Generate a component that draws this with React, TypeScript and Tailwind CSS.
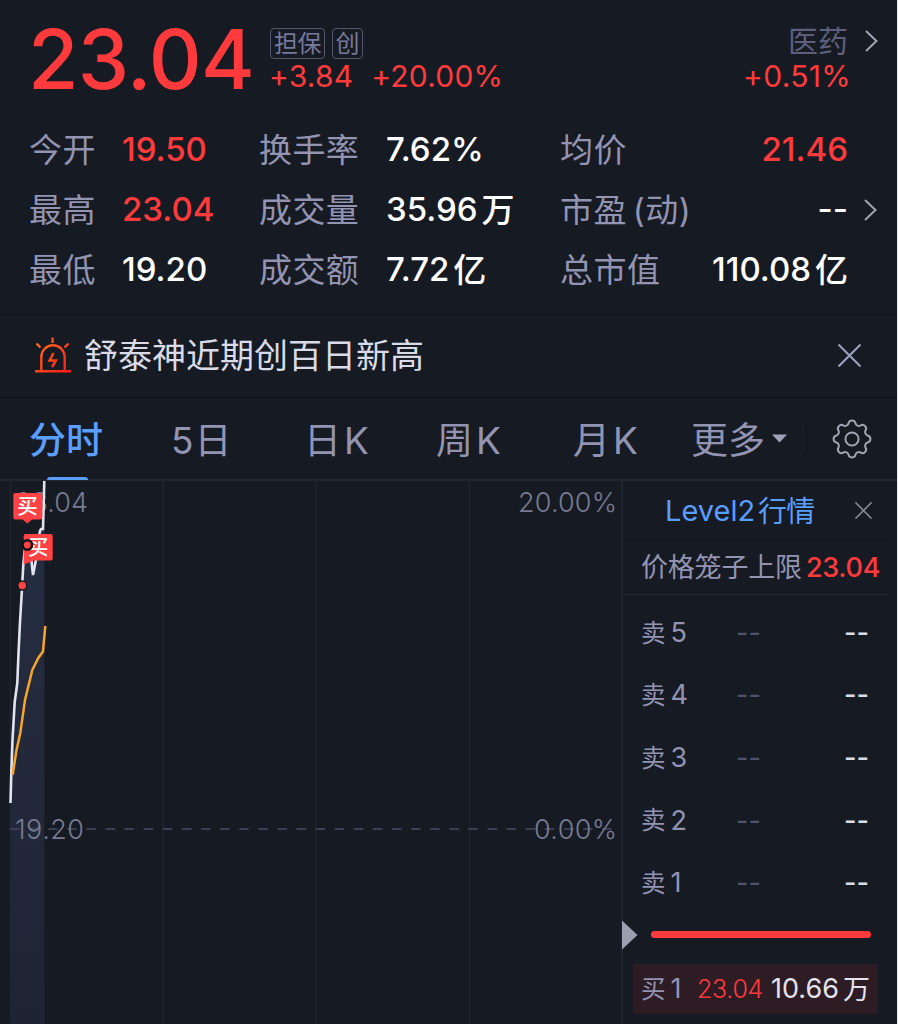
import React from 'react';

interface Quote {
  label: string;
  value: string;
  unit?: string;
  up?: boolean;
  more?: boolean;
}

const GRID_X = [10.5, 163, 316, 469.5];

const LEFT: Quote[] = [
  { label: '今开', value: '19.50', up: true },
  { label: '最高', value: '23.04', up: true },
  { label: '最低', value: '19.20' },
];

const MIDDLE: Quote[] = [
  { label: '换手率', value: '7.62%' },
  { label: '成交量', value: '35.96', unit: '万' },
  { label: '成交额', value: '7.72', unit: '亿' },
];

const RIGHT: Quote[] = [
  { label: '均价', value: '21.46', up: true },
  { label: '市盈 (动)', value: '--', more: true },
  { label: '总市值', value: '110.08', unit: '亿' },
];

const PRICE_LINE =
  'M10.5 322L11.3 292L12.5 259L14.7 221L17.3 202L18.6 170L20 141L21.8 111L23.3 84L25 66L29 62L31.5 80L33 94L35.7 80L38 60L40 50L41 48H43L44.3 0';
const AVG_LINE = 'M12.7 293.7L16.5 269L20.3 252L25 219L32.3 189L38.3 177L43 170.5L45.3 145';

// Eight round teeth joined by shallow valleys
const gearPath = () => {
  const at = (deg: number) => {
    const a = (deg * Math.PI) / 180;
    return `${(20 + 15.8 * Math.cos(a)).toFixed(2)} ${(20 + 15.8 * Math.sin(a)).toFixed(2)}`;
  };
  let d = `M${at(-13)}`;
  for (let i = 0; i < 8; i++) {
    d += `A3.6 3.6 0 0 1 ${at(i * 45 + 13)}A3.6 3.6 0 0 0 ${at(i * 45 + 32)}`;
  }
  return `${d}Z`;
};

const Chevron: React.FC = () => (
  <svg className="h-[22px] w-[13px]" viewBox="0 0 13 22" fill="none" stroke="#a0a3b1" strokeWidth={2}>
    <path d="M1 1L11.5 11L1 21" />
  </svg>
);

const Close: React.FC<{ className: string }> = ({ className }) => (
  <svg className={className} viewBox="0 0 22 22" fill="none" stroke="currentColor" strokeWidth={2}>
    <path d="M0.5 0.5L21.5 21.5M21.5 0.5L0.5 21.5" />
  </svg>
);

const QuoteValue: React.FC<{ item: Quote }> = ({ item }) => (
  <span className={`flex items-center pb-px text-[33px] font-medium ${item.up ? 'text-[#ff3a3d]' : 'text-white'}`}>
    {item.value}
    {item.unit && <span className="ml-1 pt-px">{item.unit}</span>}
  </span>
);

const Header: React.FC = () => (
  <header className="flex h-[120px] pl-[28px] pr-[19px]">
    <div className="w-[242px] pt-[15px] text-[82px] leading-[90px] font-medium tracking-[-0.7px] text-[#ff3a3d]">23.04</div>
    <div className="flex-1 pt-[28px]">
      <div className="flex gap-[7px] text-[24px] leading-[29px] text-[#77799a]">
        <span className="h-[31px] w-[55px] rounded border border-[#55576f] text-center tracking-[-0.5px]">担保</span>
        <span className="h-[31px] w-[31px] rounded border border-[#55576f] text-center">创</span>
      </div>
      <div className="-mt-px -ml-px flex gap-[18px] text-[30px] leading-[36px] tracking-[0.2px] text-[#ff3a3d]">
        <span>+3.84</span>
        <span>+20.00%</span>
      </div>
    </div>
    <div className="flex gap-[16px] pt-[23px]">
      <div className="flex flex-col items-end">
        <span className="mr-px text-[30px] leading-[36px] text-[#5d5f7c]">医药</span>
        <span className="-mt-px -mr-[2px] text-[30px] leading-[36px] tracking-[0.3px] text-[#ff3a3d]">+0.51%</span>
      </div>
      <div className="pt-[7px]"><Chevron /></div>
    </div>
  </header>
);

const Quotes: React.FC = () => (
  <section className="flex h-[193px] pl-[29px] text-[33px] text-[#9294b2]">
    <div className="w-[230px]">
      {LEFT.map(item => (
        <div key={item.label} className="flex h-[60px] items-center">
          <span className="w-[93px] tracking-[0.4px]">{item.label}</span>
          <QuoteValue item={item} />
        </div>
      ))}
    </div>
    <div className="w-[301px]">
      {MIDDLE.map(item => (
        <div key={item.label} className="flex h-[60px] items-center">
          <span className="w-[127px] tracking-[0.4px]">{item.label}</span>
          <QuoteValue item={item} />
        </div>
      ))}
    </div>
    <div className="w-[320px]">
      {RIGHT.map(item => (
        <div key={item.label} className="flex h-[60px] items-center">
          <span className="flex-1 tracking-[0.5px] [word-spacing:-4px]">{item.label}</span>
          <QuoteValue item={item} />
          <span className="flex w-8 justify-end pr-[3px]">{item.more && <Chevron />}</span>
        </div>
      ))}
    </div>
  </section>
);

const Notice: React.FC = () => (
  <section className="flex h-[85px] items-center border-y border-[#10121a] pr-[36px] pl-[34px]">
    <svg className="h-[38px] w-[38px]" viewBox="0 0 38 38" fill="none" strokeWidth={2.4}>
      <defs>
        <linearGradient id="alarm" gradientUnits="userSpaceOnUse" x1="4" y1="4" x2="34" y2="36">
          <stop offset="0" stopColor="#ff6d1f" />
          <stop offset="1" stopColor="#ff1a14" />
        </linearGradient>
      </defs>
      <g stroke="url(#alarm)">
        <path d="M7.3 34V20A11.7 11.7 0 0 1 30.7 20V34M1 34.3H37M2.5 6.5L6.5 10.5M34.5 6.5L30.5 10.5" />
        <path d="M19.5 16L15.5 23.5L22 23.5L18 30" />
      </g>
      <path d="M18.6 0.5V6" stroke="#ff4a1c" />
    </svg>
    <span className="ml-[12px] flex-1 pt-px text-[34px] text-[#d9dbe8]">舒泰神近期创百日新高</span>
    <Close className="h-[23px] w-[23px] text-[#9c9fbd]" />
  </section>
);

const Tabs: React.FC = () => (
  <nav className="relative flex h-[83px] items-center border-b-2 border-[#222530] pl-[29px] text-[37px] text-[#9294b2]">
    <div className="w-[142px] pt-[3px] font-medium text-[#5a9eff]">分时</div>
    <div className="flex w-[133px] gap-[1px] pt-[3px]"><span>5</span><span>日</span></div>
    <div className="flex w-[132px] gap-[3px] pt-[3px]"><span>日</span><span>K</span></div>
    <div className="flex w-[137px] gap-[3px] pt-[3px]"><span>周</span><span>K</span></div>
    <div className="flex w-[118px] gap-[3px] pt-[3px]"><span>月</span><span>K</span></div>
    <div className="flex w-[141px] items-center gap-[7px]">
      <span className="pt-[3px]">更多</span>
      <svg className="h-[9px] w-[15px]" viewBox="0 0 15 9"><path d="M0 0.5H15L7.5 8.5Z" fill="#a0a3b8" /></svg>
      <span className="ml-[12px] h-7 w-px bg-[#10121a]" />
    </div>
    <svg className="h-10 w-10" viewBox="0 0 40 40" fill="none" stroke="#a0a3b1" strokeWidth={2}>
      <path d={gearPath()} strokeLinejoin="round" />
      <circle cx={20} cy={20} r={6.6} />
    </svg>
    <span className="absolute -bottom-px left-[47px] h-[3px] w-[41px] rounded-t-sm bg-[#5a9eff]" />
  </nav>
);

const Chart: React.FC = () => (
  <svg className="h-[543px] w-[621px] font-light" viewBox="0 0 621 543" fill="none">
    <defs>
      <linearGradient id="area" x1="0" y1="0" x2="0" y2="1">
        <stop offset="0" stopColor="#262e42" />
        <stop offset="1" stopColor="#1f2434" />
      </linearGradient>
    </defs>
    {GRID_X.map(x => <path key={x} d={`M${x} 0V543`} stroke="#20242f" strokeWidth={1.5} />)}
    <path d={`${PRICE_LINE}V543H10Z`} fill="url(#area)" />
    <path d="M10 348H614" stroke="#3c3f54" strokeWidth={2} strokeDasharray="9.5 9.6" />
    <g fill="#787b92" fontSize={27}>
      <text x={15} y={31} textLength={73}>23.04</text>
      <text x={15} y={357.5} textLength={69}>19.20</text>
      <text x={518} y={31} textLength={99}>20.00%</text>
      <text x={534} y={357.5} textLength={83}>0.00%</text>
    </g>
    <path d={PRICE_LINE} stroke="#e2e3ee" strokeWidth={2.6} />
    <path d={AVG_LINE} stroke="#f5a52b" strokeWidth={2.5} />
    <path d="M15.3 12H40.3Q42.3 12 42.3 14V36.5Q42.3 38.5 40.3 38.5H32L27.3 42.5L22.6 38.5H15.3Q13.3 38.5 13.3 36.5V14Q13.3 12 15.3 12Z" fill="#ff4245" />
    <path d="M25.7 53H50.7Q52.7 53 52.7 55V77.5Q52.7 79.5 50.7 79.5H34L23.7 83.5V55Q23.7 53 25.7 53Z" fill="#ff4245" />
    <g fill="#fff" fontSize={20.5} fontWeight={500}>
      <text x={17.3} y={33}>买</text>
      <text x={28} y={74}>买</text>
    </g>
    <circle cx={22.3} cy={104.5} r={4.5} fill="#ff4245" stroke="#161920" strokeWidth={1.5} />
    <circle cx={27.3} cy={64} r={4.7} fill="#ff4245" stroke="#12131a" strokeWidth={2.6} />
  </svg>
);

const OrderBook: React.FC = () => (
  <aside className="flex-1 border-l-2 border-[#20242f] pr-[9px] text-[27px] text-[#9294b2]">
    <div className="flex h-[60px] items-center border-b border-[#10121a] pl-[42px]">
      <span className="flex w-[190px] gap-[3px] text-[29px] text-[#5a9eff]"><span>Level2</span><span className="pt-px tracking-[-0.8px]">行情</span></span>
      <Close className="h-[17px] w-[17px] text-[#8a8d9c]" />
    </div>
    <div className="flex h-[54px] items-center border-b border-[#222530] pl-[18px]">
      <span className="w-[165px] tracking-[-0.2px]">价格笼子上限</span>
      <span className="font-medium tracking-[-0.3px] text-[#ff3a3d]">23.04</span>
    </div>
    <div className="pt-[6px]">
      {[5, 4, 3, 2, 1].map(level => (
        <div key={level} className="flex h-[62.6px] items-center pl-[18px]">
          <span className="flex w-[95px] items-center gap-[5px]"><span className="pt-px text-[24.5px]">卖</span>{level}</span>
          <span className="w-[108px] text-[#50536e]">--</span>
          <span className="font-medium text-[#d9dbe8]">--</span>
        </div>
      ))}
    </div>
    <div className="flex h-[42px] items-center">
      <svg className="-ml-px h-[30px] w-[16px]" viewBox="0 0 16 30"><path d="M0 0.5L15.5 15L0 29.5Z" fill="#9a9eae" /></svg>
      <span className="ml-[13px] h-[7px] w-[220px] rounded-full bg-[#ff3a3d]" />
    </div>
    <div className="mt-[8px] ml-[10px] flex h-[50px] w-[245px] items-center bg-[#2d1c23] pl-[8px]">
      <span className="flex w-[56px] items-center gap-[5px]"><span className="pt-px text-[24.5px]">买</span>1</span>
      <span className="w-[74px] pt-px text-[25px] font-light tracking-[-0.3px] text-[#ff3a3d]">23.04</span>
      <span className="flex gap-[4px] text-[#e2e3ee]"><span>10.66</span><span className="pt-px">万</span></span>
    </div>
  </aside>
);

const App: React.FC = () => (
  <main className="h-screen w-[898px] overflow-hidden border-r border-[#e5e6ea] bg-[#161a22] font-['Inter','Noto_Sans_CJK_SC',sans-serif] leading-none whitespace-nowrap">
    <Header />
    <Quotes />
    <Notice />
    <Tabs />
    <div className="flex h-[543px]">
      <Chart />
      <OrderBook />
    </div>
  </main>
);

export default App;
